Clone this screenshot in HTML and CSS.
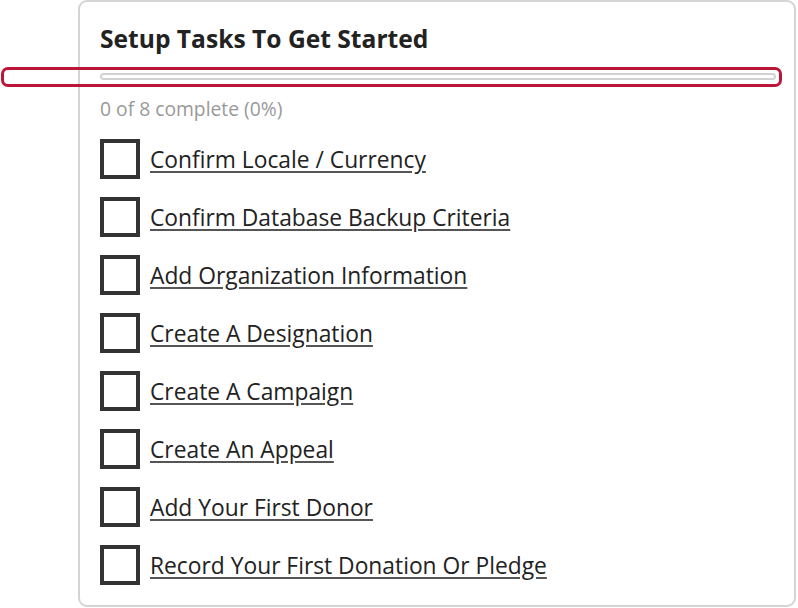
FILE: index.html
```html
<!DOCTYPE html>
<html>
<head>
<meta charset="utf-8">
<link rel="stylesheet" href="styles.css">
</head>
<body>
<div class="card">
  <h2 class="title">Setup Tasks To Get Started</h2>
  <div class="progress-wrap">
    <div class="progress"></div>
    <div class="focus-ring"></div>
  </div>
  <div class="status">0 of 8 complete (0%)</div>
  <ul class="tasks">
    <li class="task"><span class="box"></span><a href="#" class="link">Confirm Locale / Currency</a></li>
    <li class="task"><span class="box"></span><a href="#" class="link">Confirm Database Backup Criteria</a></li>
    <li class="task"><span class="box"></span><a href="#" class="link">Add Organization Information</a></li>
    <li class="task"><span class="box"></span><a href="#" class="link">Create A Designation</a></li>
    <li class="task"><span class="box"></span><a href="#" class="link">Create A Campaign</a></li>
    <li class="task"><span class="box"></span><a href="#" class="link">Create An Appeal</a></li>
    <li class="task"><span class="box"></span><a href="#" class="link">Add Your First Donor</a></li>
    <li class="task"><span class="box"></span><a href="#" class="link">Record Your First Donation Or Pledge</a></li>
  </ul>
</div>
</body>
</html>
```

FILE: styles.css
```css
html, body {
  margin: 0;
  padding: 0;
  background: #fff;
}
body {
  font-family: "Open Sans", "Noto Sans", sans-serif;
  color: #222;
}
.card {
  box-sizing: border-box;
  margin-left: 78px;
  width: 718px;
  height: 607px;
  border: 2px solid #d4d4d4;
  border-radius: 9px;
  padding: 20px 18px 0 20px;
}
.title {
  margin: 0;
  font-size: 24.6px;
  line-height: 34px;
  font-weight: 700;
  color: #222;
}
.progress-wrap {
  position: relative;
  margin-top: 17px;
}
.progress {
  height: 7px;
  box-sizing: border-box;
  border: 2px solid #d2d2d2;
  border-radius: 4px;
  background: #fff;
}
.focus-ring {
  position: absolute;
  left: -99px;
  right: -6px;
  top: -6px;
  bottom: -7px;
  border: 3px solid #bb1538;
  border-radius: 7px;
}
.status {
  margin-top: 16px;
  font-size: 19.3px;
  line-height: 26px;
  color: #999;
}
.tasks {
  list-style: none;
  margin: 17px 0 0;
  padding: 0;
  display: flex;
  flex-direction: column;
  gap: 18px;
}
.task {
  display: flex;
  align-items: center;
  gap: 10px;
  height: 40px;
}
.box {
  box-sizing: border-box;
  width: 40px;
  height: 40px;
  border: 4px solid #333;
  flex: none;
}
.link {
  font-size: 22.8px;
  color: #222;
  text-decoration: underline;
  text-decoration-color: #555;
  text-underline-offset: 3px;
}
```
